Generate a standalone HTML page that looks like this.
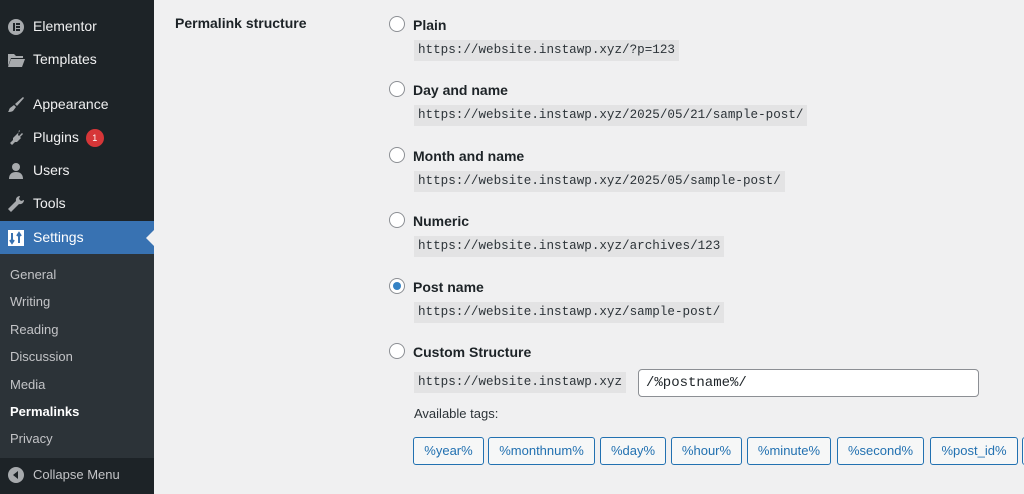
<!DOCTYPE html>
<html><head><meta charset="utf-8"><style>
*{margin:0;padding:0;box-sizing:border-box}
body{width:1024px;height:494px;overflow:hidden;background:#f0f0f1;font-family:"Liberation Sans",sans-serif;position:relative;color:#1d2327}
#side{position:absolute;left:0;top:0;width:154px;height:494px;background:#1d2327}
.mi{position:absolute;left:0;width:154px;height:33px;color:#f0f0f1;font-size:14px;line-height:33px;padding-left:33px}
.mi svg{position:absolute;left:7px;top:8px}
.sub{position:absolute;left:0;top:254px;width:154px;height:204px;background:#2c3338}
.si{position:absolute;left:10px;font-size:13px;color:#c3c4c7}
.r{position:absolute;left:389px;width:16px;height:16px;border:1px solid #8c8f94;border-radius:50%;background:#fff}
.lab{position:absolute;left:413px;font-size:14px;font-weight:bold;color:#1d2327}
code{position:absolute;left:414px;height:21px;line-height:21px;padding:0 4px;background:#e3e3e4;font-family:"Liberation Mono",monospace;font-size:12.6px;color:#2c3338}
.tag{position:absolute;top:437px;height:28px;border:1px solid #2271b1;border-radius:3px;background:#f6f7f7;color:#2271b1;font-size:13px;line-height:26px;text-align:center}
</style></head><body>
<div id="side">
<div class="mi" style="top:10px"><svg width="18" height="18"><circle cx="9" cy="9" r="8" fill="#a7aaad"/><rect x="6" y="5" width="2" height="8" fill="#1d2327"/><rect x="9" y="5" width="4" height="2" fill="#1d2327"/><rect x="9" y="8" width="4" height="2" fill="#1d2327"/><rect x="9" y="11" width="4" height="2" fill="#1d2327"/></svg>Elementor</div>
<div class="mi" style="top:43px"><svg width="18" height="18"><path d="M1 3h6l2 2h7v2H4L1 15z M4 8h14l-3 8H1z" fill="#a7aaad"/></svg>Templates</div>
<div class="mi" style="top:88px"><svg width="18" height="18"><path d="M16 1l1 1-7 8-2-2z M7 9l2 2-3 4c-2 1-4 1-5 1 1-1 1-3 2-4z" fill="#a7aaad"/></svg>Appearance</div>
<div class="mi" style="top:121px"><svg width="18" height="18"><path d="M12 1l1 1-3 3 2 2 3-3 1 1-3 3 1 1-4 4-2 0-3 3-2-2 3-3 0-2 4-4 1 1z" fill="#a7aaad"/></svg>Plugins <span style="display:inline-block;width:18px;height:18px;border-radius:9px;background:#d63638;color:#fff;font-size:9px;line-height:18px;text-align:center;vertical-align:1px;margin-left:3px">1</span></div>
<div class="mi" style="top:154px"><svg width="18" height="18"><circle cx="9" cy="5" r="4" fill="#a7aaad"/><path d="M2 17c0-5 3-7 7-7s7 2 7 7z" fill="#a7aaad"/></svg>Users</div>
<div class="mi" style="top:187px"><svg width="18" height="18"><path d="M13 1a4 4 0 0 0-4 5L1 14l3 3 8-8a4 4 0 0 0 5-4l-3 1-2-2z" fill="#a7aaad"/></svg>Tools</div>
<div class="mi" style="top:221px;background:#3872b2;color:#fff"><svg width="18" height="18"><rect x="1" y="1" width="16" height="16" fill="#fff"/><path d="M5 4v10M3 11l2 3 2-3M12 14V4M10 7l2-3 2 3" stroke="#3872b2" stroke-width="2" fill="none"/></svg>Settings</div>
<svg style="position:absolute;left:146px;top:230px" width="8" height="16"><path d="M8 0L0 8l8 8z" fill="#f0f0f1"/></svg>
<div class="sub">
<div class="si" style="top:13px">General</div>
<div class="si" style="top:40px">Writing</div>
<div class="si" style="top:68px">Reading</div>
<div class="si" style="top:95px">Discussion</div>
<div class="si" style="top:123px">Media</div>
<div class="si" style="top:150px;color:#fff;font-weight:bold">Permalinks</div>
<div class="si" style="top:177px">Privacy</div>
</div>
<div class="mi" style="top:458px;color:#c3c4c7;font-size:13px;line-height:33px"><svg width="18" height="18" style="top:8px"><circle cx="9" cy="9" r="8" fill="#a7aaad"/><path d="M11 5L6 9l5 4z" fill="#1d2327"/></svg>Collapse Menu</div>
</div>
<div class="lab" style="left:175px;top:15px">Permalink structure</div>
<div class="r" style="top:16px"></div><div class="lab" style="top:17px">Plain</div><code style="top:40px">https://website.instawp.xyz/?p=123</code>
<div class="r" style="top:81px"></div><div class="lab" style="top:82px">Day and name</div><code style="top:105px">https://website.instawp.xyz/2025/05/21/sample-post/</code>
<div class="r" style="top:147px"></div><div class="lab" style="top:148px">Month and name</div><code style="top:171px">https://website.instawp.xyz/2025/05/sample-post/</code>
<div class="r" style="top:212px"></div><div class="lab" style="top:213px">Numeric</div><code style="top:236px">https://website.instawp.xyz/archives/123</code>
<div class="r" style="top:278px"><div style="position:absolute;left:3px;top:3px;width:8px;height:8px;border-radius:50%;background:#3582c4"></div></div><div class="lab" style="top:279px">Post name</div><code style="top:302px">https://website.instawp.xyz/sample-post/</code>
<div class="r" style="top:343px"></div><div class="lab" style="top:344px">Custom Structure</div>
<code style="top:372px;width:212px">https://website.instawp.xyz</code>
<div style="position:absolute;left:638px;top:369px;width:341px;height:28px;border:1px solid #8c8f94;border-radius:4px;background:#fff;font-family:'Liberation Mono',monospace;font-size:14px;line-height:26px;padding-left:7px">/%postname%/</div>
<div style="position:absolute;left:414px;top:406px;font-size:13px;color:#2c3338">Available tags:</div>
<div class="tag" style="left:413px;width:71px">%year%</div>
<div class="tag" style="left:488px;width:107px">%monthnum%</div>
<div class="tag" style="left:600px;width:66px">%day%</div>
<div class="tag" style="left:671px;width:71px">%hour%</div>
<div class="tag" style="left:747px;width:84px">%minute%</div>
<div class="tag" style="left:837px;width:87px">%second%</div>
<div class="tag" style="left:930px;width:88px">%post_id%</div>
<div class="tag" style="left:1022px;width:40px"></div>
</body></html>
